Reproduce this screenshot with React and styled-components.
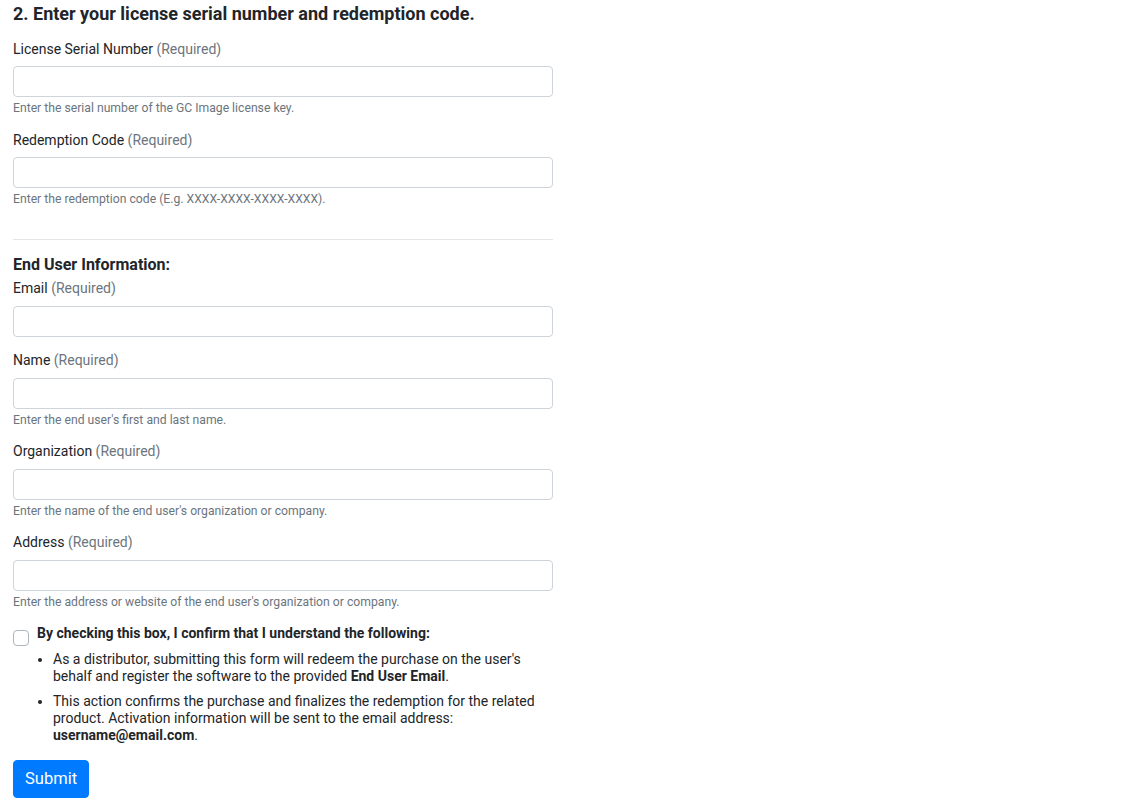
import React from "react";
import styled, { createGlobalStyle } from "styled-components";

const GlobalStyle = createGlobalStyle`
  html, body {
    margin: 0;
    padding: 0;
    background: #fff;
  }
  body {
    font-family: Roboto, "Liberation Sans", Arial, sans-serif;
    font-size: 14px;
    line-height: 1.5;
    color: #212529;
  }
  * {
    box-sizing: border-box;
  }
`;

const Page = styled.div`
  padding: 3px 13px 0;
`;

const Form = styled.form`
  width: 540px;
`;

const Heading = styled.h4`
  margin: 0 0 14px;
  font-size: 18px;
  font-weight: 700;
  line-height: 21.6px;
`;

const SubHeading = styled.h5`
  margin: 0 0 4px;
  font-size: 16px;
  font-weight: 700;
  line-height: 19px;
`;

const Group = styled.div`
  margin-bottom: 13.5px;
`;

const Label = styled.label`
  display: block;
  margin-bottom: 6.5px;
  font-size: 14px;
  line-height: 21px;
`;

const Required = styled.span`
  color: #6c757d;
`;

const Input = styled.input`
  display: block;
  width: 100%;
  height: 31px;
  padding: 4px 10px;
  font: inherit;
  color: #495057;
  background: #fff;
  border: 1px solid #ced4da;
  border-radius: 4px;
  outline: none;
`;

const Help = styled.small`
  display: block;
  margin-top: 3px;
  font-size: 12.2px;
  line-height: 16px;
  color: #6c757d;
`;

const Divider = styled.hr`
  margin: 32px 0 15px;
  border: 0;
  border-top: 1px solid rgba(0, 0, 0, 0.1);
`;

const CheckRow = styled.div`
  display: flex;
  align-items: flex-start;
  gap: 8px;
`;

const Box = styled.input`
  appearance: none;
  flex: none;
  width: 16px;
  height: 16px;
  margin: 6.5px 0 0;
  border: 1px solid #adb5bd;
  border-radius: 4px;
  background: #fff;
`;

const CheckTitle = styled.label`
  font-weight: 700;
  line-height: 21px;
`;

const List = styled.ul`
  margin: 5px 0 0;
  padding-left: 40px;
`;

const Item = styled.li`
  line-height: 17px;
  & + & {
    margin-top: 8px;
  }
`;

const Strong = styled.strong`
  font-weight: 700;
`;

const Submit = styled.button`
  margin-top: 16px;
  padding: 6px 11px;
  font-family: inherit;
  font-size: 16.5px;
  line-height: 24px;
  color: #fff;
  background: #007bff;
  border: 1px solid #007bff;
  border-radius: 4px;
`;

const fields = [
  {
    label: "License Serial Number",
    help: "Enter the serial number of the GC Image license key.",
  },
  {
    label: "Redemption Code",
    help: "Enter the redemption code (E.g. XXXX-XXXX-XXXX-XXXX).",
  },
];

const userFields = [
  { label: "Email" },
  { label: "Name", help: "Enter the end user's first and last name." },
  {
    label: "Organization",
    help: "Enter the name of the end user's organization or company.",
  },
  {
    label: "Address",
    help: "Enter the address or website of the end user's organization or company.",
  },
];

const Field = ({ label, help }) => (
  <Group>
    <Label>
      {label} <Required>(Required)</Required>
    </Label>
    <Input type="text" />
    {help && <Help>{help}</Help>}
  </Group>
);

export default function App() {
  return (
    <>
      <GlobalStyle />
      <Page>
        <Form onSubmit={(e) => e.preventDefault()}>
          <Heading>2. Enter your license serial number and redemption code.</Heading>
          {fields.map((f) => (
            <Field key={f.label} {...f} />
          ))}
          <Divider />
          <SubHeading>End User Information:</SubHeading>
          {userFields.map((f) => (
            <Field key={f.label} {...f} />
          ))}
          <CheckRow>
            <Box type="checkbox" id="confirm" />
            <CheckTitle htmlFor="confirm">
              By checking this box, I confirm that I understand the following:
            </CheckTitle>
          </CheckRow>
          <List>
            <Item>
              As a distributor, submitting this form will redeem the purchase on the
              user's behalf and register the software to the provided{" "}
              <Strong>End User Email</Strong>.
            </Item>
            <Item>
              This action confirms the purchase and finalizes the redemption for the
              related product. Activation information will be sent to the email
              address: <Strong>username@email.com</Strong>.
            </Item>
          </List>
          <Submit type="submit">Submit</Submit>
        </Form>
      </Page>
    </>
  );
}
